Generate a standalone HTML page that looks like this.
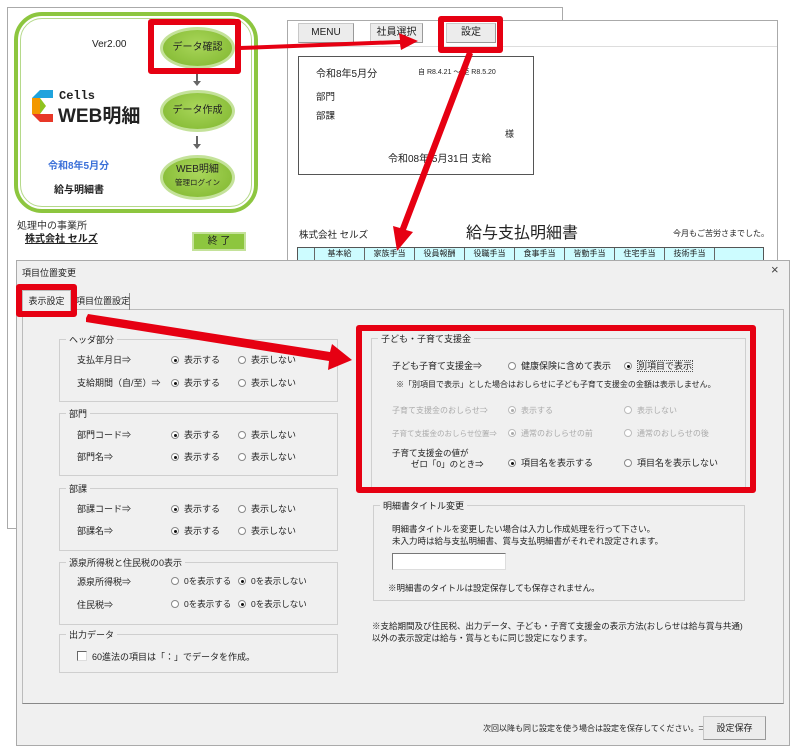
<!DOCTYPE html>
<html><head><meta charset="utf-8"><style>
*{box-sizing:border-box;margin:0;padding:0}
body{width:795px;height:751px;background:#fff;position:relative;overflow:hidden;font-family:"Liberation Sans","Noto Sans CJK JP",sans-serif;font-size:10px;color:#222}
.a{position:absolute;white-space:nowrap}
.btn{position:absolute;background:#ececec;border:1px solid #c8c8c8;border-right-color:#999;border-bottom-color:#999;text-align:center;font-size:10px}
.ell{position:absolute;border-radius:50%;background:radial-gradient(ellipse at 50% 40%,#a9d65a,#7fb62e);border:3px solid #c4e29a;text-align:center;font-size:10px;color:#222}
.red{position:absolute;border:6px solid #e60012;border-radius:3px}
.gb{position:absolute;border:1px solid #cfcfcf}
.gb>.t{position:absolute;top:-7px;left:6px;background:#f0f0f0;padding:0 3px;font-size:9px}
.r{position:absolute;white-space:nowrap;font-size:9px}
.r i{display:inline-block;width:8px;height:8px;border-radius:50%;border:1px solid #888;background:#fff;vertical-align:-1px;margin-right:5px;position:relative}
.r i.on:after{content:"";position:absolute;left:1.5px;top:1.5px;width:3px;height:3px;border-radius:50%;background:#111}
.g{color:#aaa}
.g i{border-color:#bbb}
.g i.on:after{background:#aaa}
</style></head><body>
<div class="a" style="left:7px;top:7px;width:556px;height:522px;border:1px solid #aaa;background:#fff"></div>
<div class="a" style="left:14px;top:12px;width:244px;height:201px;border:4px solid #8dc63f;border-radius:28px"></div>
<div class="a" style="left:20px;top:18px;width:232px;height:189px;border:1px solid #b5d98a;border-radius:22px"></div>
<div class="a" style="left:92px;top:39px;font-size:10px">Ver2.00</div>
<div class="ell" style="left:160px;top:27px;width:75px;height:42px;line-height:36px">データ確認</div>
<div class="ell" style="left:160px;top:90px;width:75px;height:42px;line-height:36px">データ作成</div>
<div class="ell" style="left:160px;top:155px;width:75px;height:45px;line-height:13px;padding-top:5px">WEB明細<br><span style="font-size:7.5px">管理ログイン</span></div>
<div class="a" style="left:196px;top:73px;width:2px;height:9px;background:#666"></div><div class="a" style="left:193px;top:81px;border:4px solid transparent;border-top:5px solid #666"></div>
<div class="a" style="left:196px;top:136px;width:2px;height:9px;background:#666"></div><div class="a" style="left:193px;top:144px;border:4px solid transparent;border-top:5px solid #666"></div>
<svg class="a" style="left:32px;top:90px" width="21" height="32" viewBox="0 0 21 32"><path d="M0 8 L8 0 L21 0 L21 8 Z" fill="#1fa3dd"/><path d="M0 8 L8 8 L8 24 L0 24 Z" fill="#f39800"/><path d="M0 24 L8 24 L21 24 L21 32 L8 32 Z" fill="#e83828"/><path d="M8 8 L14 16 L8 24Z" fill="#8fc31f"/></svg>
<div class="a" style="left:59px;top:89px;font-size:12px;font-weight:bold;font-family:'Liberation Mono','DejaVu Sans Mono',monospace">Cells</div>
<div class="a" style="left:58px;top:101px;font-size:19px;font-weight:bold">WEB明細</div>
<div class="a" style="left:48px;top:157px;font-size:10px;font-weight:bold;color:#3a6fd8">令和8年5月分</div>
<div class="a" style="left:54px;top:181px;font-size:10px;font-weight:bold">給与明細書</div>
<div class="a" style="left:17px;top:217px;font-size:10px;color:#333">処理中の事業所</div>
<div class="a" style="left:25px;top:230px;font-size:10px;font-weight:bold;text-decoration:underline">株式会社 セルズ</div>
<div class="a" style="left:192px;top:232px;width:54px;height:19px;background:#8dc63f;border:2px solid #c4e29a;text-align:center;line-height:15px;font-size:10px">終 了</div>
<div class="a" style="left:287px;top:20px;width:491px;height:250px;border:1px solid #aaa;background:#fff"></div>
<div class="a" style="left:288px;top:46px;width:489px;height:1px;background:#ddd"></div>
<div class="btn" style="left:298px;top:23px;width:56px;height:20px;line-height:18px">MENU</div>
<div class="btn" style="left:370px;top:23px;width:53px;height:20px;line-height:18px">社員選択</div>
<div class="btn" style="left:446px;top:23px;width:50px;height:20px;line-height:18px">設定</div>
<div class="a" style="left:298px;top:56px;width:236px;height:119px;border:1px solid #555"></div>
<div class="a" style="left:316px;top:65px;font-size:10px">令和8年5月分</div>
<div class="a" style="left:418px;top:67px;font-size:7px">自 R8.4.21 ～ 至 R8.5.20</div>
<div class="a" style="left:316px;top:89px;font-size:9.5px">部門</div>
<div class="a" style="left:316px;top:108px;font-size:9.5px">部課</div>
<div class="a" style="left:505px;top:127px;font-size:9px">様</div>
<div class="a" style="left:388px;top:150px;font-size:10px">令和08年 5月31日 支給</div>
<div class="a" style="left:299px;top:227px;font-size:9.5px">株式会社 セルズ</div>
<div class="a" style="left:466px;top:219px;font-size:16px">給与支払明細書</div>
<div class="a" style="left:673px;top:228px;font-size:8px">今月もご苦労さまでした。</div>
<div class="a" style="left:297px;top:247px;width:467px;height:14px;background:#cdfcff;border:1px solid #555;display:flex;font-size:8px;line-height:12px">
<span style="width:17px;border-right:1px solid #666"></span><span style="width:50px;border-right:1px solid #666;text-align:center">基本給</span><span style="width:50px;border-right:1px solid #666;text-align:center">家族手当</span><span style="width:50px;border-right:1px solid #666;text-align:center">役員報酬</span><span style="width:50px;border-right:1px solid #666;text-align:center">役職手当</span><span style="width:50px;border-right:1px solid #666;text-align:center">食事手当</span><span style="width:50px;border-right:1px solid #666;text-align:center">皆勤手当</span><span style="width:50px;border-right:1px solid #666;text-align:center">住宅手当</span><span style="width:50px;border-right:1px solid #666;text-align:center">技術手当</span></div>
<div class="a" style="left:16px;top:260px;width:774px;height:486px;background:#f0f0f0;border:1px solid #aaa"></div>
<div class="a" style="left:22px;top:266px;font-size:9px">項目位置変更</div>
<div class="a" style="left:771px;top:262px;font-size:13px;color:#444">×</div>
<div class="a" style="left:22px;top:309px;width:762px;height:395px;border:1px solid #bbb;border-bottom:1px solid #888"></div>
<div class="a" style="left:22px;top:290px;width:49px;height:21px;background:#f0f0f0;border:1px solid #bbb;border-bottom:none;font-size:9px;text-align:center;line-height:20px">表示設定</div>
<div class="a" style="left:72px;top:293px;width:58px;height:17px;border-right:1px solid #888;font-size:9px;line-height:16px;padding-left:4px">項目位置設定</div>
<div class="gb" style="left:59px;top:339px;width:279px;height:63px"><span class="t">ヘッダ部分</span></div>
<div class="r" style="left:77px;top:353px">支払年月日⇒</div><div class="r" style="left:171px;top:353px"><i class="on"></i>表示する</div><div class="r" style="left:238px;top:353px"><i></i>表示しない</div>
<div class="r" style="left:77px;top:376px">支給期間（自/至）⇒</div><div class="r" style="left:171px;top:376px"><i class="on"></i>表示する</div><div class="r" style="left:238px;top:376px"><i></i>表示しない</div>
<div class="gb" style="left:59px;top:413px;width:279px;height:63px"><span class="t">部門</span></div>
<div class="r" style="left:77px;top:428px">部門コード⇒</div><div class="r" style="left:171px;top:428px"><i class="on"></i>表示する</div><div class="r" style="left:238px;top:428px"><i></i>表示しない</div>
<div class="r" style="left:77px;top:450px">部門名⇒</div><div class="r" style="left:171px;top:450px"><i class="on"></i>表示する</div><div class="r" style="left:238px;top:450px"><i></i>表示しない</div>
<div class="gb" style="left:59px;top:488px;width:279px;height:63px"><span class="t">部課</span></div>
<div class="r" style="left:77px;top:502px">部課コード⇒</div><div class="r" style="left:171px;top:502px"><i class="on"></i>表示する</div><div class="r" style="left:238px;top:502px"><i></i>表示しない</div>
<div class="r" style="left:77px;top:524px">部課名⇒</div><div class="r" style="left:171px;top:524px"><i class="on"></i>表示する</div><div class="r" style="left:238px;top:524px"><i></i>表示しない</div>
<div class="gb" style="left:59px;top:562px;width:279px;height:63px"><span class="t">源泉所得税と住民税の0表示</span></div>
<div class="r" style="left:77px;top:575px">源泉所得税⇒</div><div class="r" style="left:171px;top:575px;font-size:8.5px"><i></i>0を表示する</div><div class="r" style="left:238px;top:575px;font-size:8.5px"><i class="on"></i>0を表示しない</div>
<div class="r" style="left:77px;top:598px">住民税⇒</div><div class="r" style="left:171px;top:598px;font-size:8.5px"><i></i>0を表示する</div><div class="r" style="left:238px;top:598px;font-size:8.5px"><i class="on"></i>0を表示しない</div>
<div class="gb" style="left:59px;top:634px;width:279px;height:39px"><span class="t">出力データ</span></div>
<div class="r" style="left:77px;top:650px"><span style="display:inline-block;width:10px;height:10px;border:1px solid #666;border-right-color:#ddd;border-bottom-color:#ddd;background:#fff;vertical-align:-1px;margin-right:5px"></span>60進法の項目は「：」でデータを作成。</div>
<div class="gb" style="left:371px;top:338px;width:375px;height:150px"><span class="t">子ども・子育て支援金</span></div>
<div class="r" style="left:392px;top:359px">子ども子育て支援金⇒</div><div class="r" style="left:508px;top:359px"><i></i>健康保険に含めて表示</div><div class="r" style="left:624px;top:359px"><i class="on"></i><span style="border:1px dotted #555">別項目で表示</span></div>
<div class="r" style="left:396px;top:379px;font-size:8px">※「別項目で表示」とした場合はおしらせに子ども子育て支援金の金額は表示しません。</div>
<div class="r g" style="left:392px;top:405px;font-size:8px">子育て支援金のおしらせ⇒</div><div class="r g" style="left:508px;top:405px;font-size:8px"><i class="on"></i>表示する</div><div class="r g" style="left:624px;top:405px;font-size:8px"><i></i>表示しない</div>
<div class="r g" style="left:392px;top:428px;font-size:7.5px">子育て支援金のおしらせ位置⇒</div><div class="r g" style="left:508px;top:428px;font-size:8px"><i class="on"></i>通常のおしらせの前</div><div class="r g" style="left:624px;top:428px;font-size:8px"><i></i>通常のおしらせの後</div>
<div class="r" style="left:392px;top:448px;font-size:8.5px;line-height:11px">子育て支援金の値が<br>&nbsp;&nbsp;&nbsp;&nbsp;&nbsp;&nbsp;&nbsp;&nbsp;ゼロ「0」のとき⇒</div>
<div class="r" style="left:508px;top:456px"><i class="on"></i>項目名を表示する</div><div class="r" style="left:624px;top:456px"><i></i>項目名を表示しない</div>
<div class="gb" style="left:373px;top:505px;width:372px;height:96px"><span class="t">明細書タイトル変更</span></div>
<div class="r" style="left:392px;top:523px;font-size:8.5px;line-height:12px">明細書タイトルを変更したい場合は入力し作成処理を行って下さい。<br>未入力時は給与支払明細書、賞与支払明細書がそれぞれ設定されます。</div>
<div class="a" style="left:392px;top:553px;width:114px;height:17px;background:#fff;border:1px solid #777;border-right-color:#ddd;border-bottom-color:#ddd"></div>
<div class="r" style="left:388px;top:582px;font-size:8.5px">※明細書のタイトルは設定保存しても保存されません。</div>
<div class="r" style="left:372px;top:620px;font-size:8.5px;line-height:12px">※支給期間及び住民税、出力データ、子ども・子育て支援金の表示方法(おしらせは給与賞与共通)<br>以外の表示設定は給与・賞与ともに同じ設定になります。</div>
<div class="r" style="left:483px;top:723px;font-size:8px">次回以降も同じ設定を使う場合は設定を保存してください。⇒</div>
<div class="btn" style="left:703px;top:716px;width:63px;height:24px;line-height:22px;font-size:9px">設定保存</div>
<div class="red" style="left:148px;top:19px;width:93px;height:55px"></div>
<div class="red" style="left:438px;top:16px;width:65px;height:37px"></div>
<div class="red" style="left:16px;top:284px;width:61px;height:33px"></div>
<div class="red" style="left:356px;top:325px;width:400px;height:168px"></div>
<svg class="a" style="left:0;top:0" width="795" height="751">
<polygon points="240,46 400,40 399,33 418,41 401,50 400,44 240,50" fill="#e60012"/>
<polygon points="470,52 473,54 406,230 413,232 397,251 393,226 400,228 467,52" fill="#e60012"/>
<polygon points="86,318 88,314 330,352 332,344 352,360 328,370 329,361 86,322" fill="#e60012"/>
</svg>
</body></html>
